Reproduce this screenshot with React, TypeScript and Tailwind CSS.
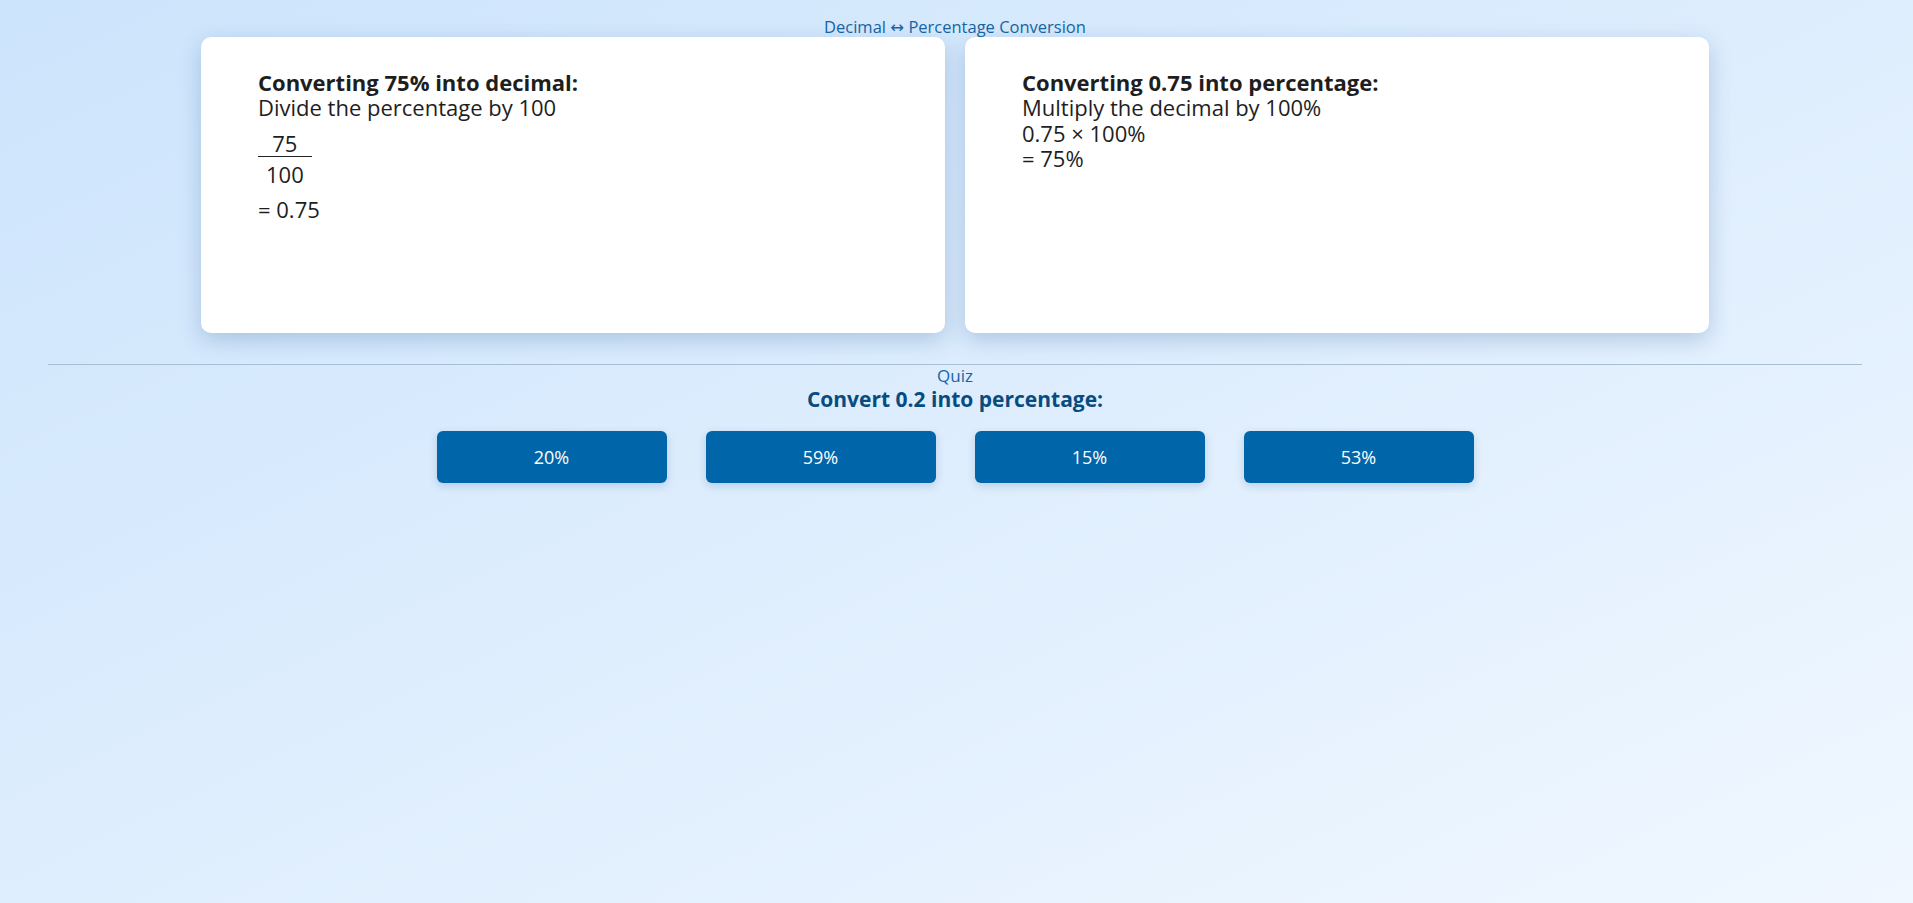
const options = ["20%", "59%", "15%", "53%"];

function Fraction({ top, bottom }: { top: string; bottom: string }) {
  return (
    <div className="mt-[11px] mb-[10px] inline-flex flex-col items-stretch text-center">
      <span className="border-b border-[#222] px-2 leading-[25px]">{top}</span>
      <span className="px-2 pt-[5px] leading-[25px]">{bottom}</span>
    </div>
  );
}

export default function App() {
  return (
    <div
      className="min-h-screen bg-linear-to-br from-[#cce4fc] to-[#f0f7ff] pl-12 pr-[51px] pt-[16px] text-[#1e1e1e]"
      style={{ fontFamily: '"Open Sans", "Noto Sans", "DejaVu Sans", sans-serif' }}
    >
      <div className="text-center text-[16.5px] leading-[21px] text-[#1565a5]">
        Decimal ↔ Percentage Conversion
      </div>

      <div className="flex justify-center gap-5">
        <div className="h-[296px] w-[744px] rounded-[10px] bg-white pl-[57px] pt-[33px] text-[22px] leading-[25px] shadow-[0_7px_22px_rgba(30,80,140,0.24)]">
          <div className="font-bold">Converting 75% into decimal:</div>
          <div>Divide the percentage by 100</div>
          <Fraction top="75" bottom="100" />
          <div>= 0.75</div>
        </div>
        <div className="h-[296px] w-[744px] rounded-[10px] bg-white pl-[57px] pt-[33px] text-[22px] leading-[25.5px] shadow-[0_7px_22px_rgba(30,80,140,0.24)]">
          <div className="font-bold leading-[25px]">Converting 0.75 into percentage:</div>
          <div>Multiply the decimal by 100%</div>
          <div>0.75 × 100%</div>
          <div>= 75%</div>
        </div>
      </div>

      <div className="mt-[31px] h-px bg-[#a8bed4]" />

      <div className="text-center text-[17px] leading-[22px] text-[#1565a5]">Quiz</div>
      <div className="text-center text-[21px] font-bold leading-[25px] text-[#084c7f]">
        Convert 0.2 into percentage:
      </div>

      <div className="mt-[19px] flex justify-center gap-[39px]">
        {options.map((o) => (
          <button
            key={o}
            className="h-[52px] w-[230px] rounded-[6px] bg-[#0165aa] text-[18px] text-white shadow-[0_3px_8px_rgba(30,80,140,0.2)]"
          >
            {o}
          </button>
        ))}
      </div>
    </div>
  );
}
